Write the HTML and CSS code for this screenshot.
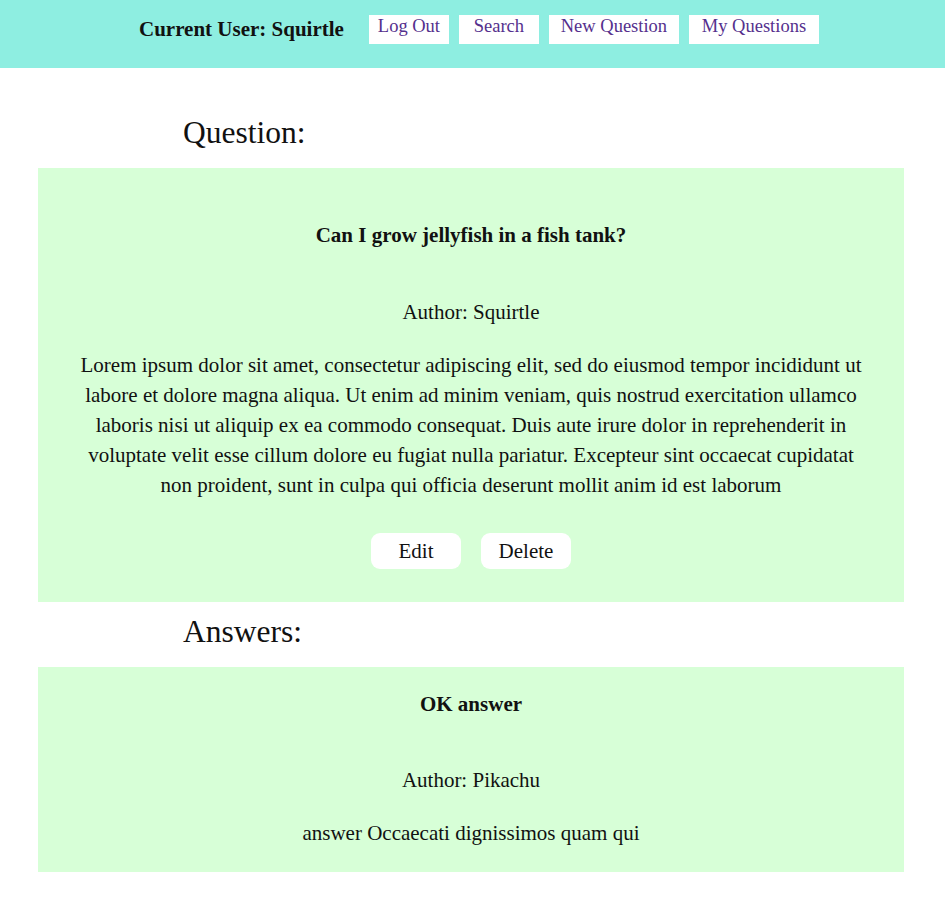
FILE: index.html
```html
<!DOCTYPE html>
<html lang="en">
<head>
<meta charset="utf-8">
<title>Question</title>
<link rel="stylesheet" href="styles.css">
</head>
<body>
<header class="topbar">
  <span class="current-user">Current User: Squirtle</span>
  <nav class="nav">
    <a class="nav-btn" href="#">Log Out</a>
    <a class="nav-btn" href="#">Search</a>
    <a class="nav-btn wide" href="#">New Question</a>
    <a class="nav-btn wide" href="#">My Questions</a>
  </nav>
</header>
<main class="page">
  <h2 class="section-title first">Question:</h2>
  <section class="card question">
    <h3 class="card-title">Can I grow jellyfish in a fish tank?</h3>
    <p class="author">Author: Squirtle</p>
    <p class="body-text">Lorem ipsum dolor sit amet, consectetur adipiscing elit, sed do eiusmod tempor incididunt ut labore et dolore magna aliqua. Ut enim ad minim veniam, quis nostrud exercitation ullamco laboris nisi ut aliquip ex ea commodo consequat. Duis aute irure dolor in reprehenderit in voluptate velit esse cillum dolore eu fugiat nulla pariatur. Excepteur sint occaecat cupidatat non proident, sunt in culpa qui officia deserunt mollit anim id est laborum</p>
    <div class="actions">
      <button class="action-btn">Edit</button>
      <button class="action-btn">Delete</button>
    </div>
  </section>
  <h2 class="section-title">Answers:</h2>
  <section class="card answer">
    <h3 class="card-title">OK answer</h3>
    <p class="author">Author: Pikachu</p>
    <p class="body-text">answer Occaecati dignissimos quam qui</p>
  </section>
</main>
</body>
</html>
```
FILE: styles.css
```css
html, body {
  margin: 0;
  padding: 0;
  background: #ffffff;
}
body {
  font-family: "Liberation Serif", "DejaVu Serif", serif;
  color: #111;
}
.topbar {
  height: 68px;
  box-sizing: border-box;
  background: #8eeee1;
  display: flex;
  align-items: flex-start;
  padding: 15px 0 0 139px;
}
.current-user {
  font-weight: bold;
  font-size: 21px;
  line-height: 28px;
  margin-right: 25px;
}
.nav {
  display: flex;
  gap: 10px;
}
.nav-btn {
  display: block;
  width: 80px;
  height: 29px;
  box-sizing: border-box;
  background: #ffffff;
  color: #55308d;
  text-decoration: none;
  text-align: center;
  font-size: 18.5px;
  line-height: 23px;
}
.nav-btn.wide {
  width: 130px;
}
.page {
  margin: 0 41px 0 38px;
}
.section-title {
  font-weight: normal;
  font-size: 31.5px;
  line-height: 36px;
  margin: 12px 0 17px 145px;
}
.section-title.first {
  margin-top: 47px;
}
.card {
  background: #d7ffd7;
  text-align: center;
  padding: 22px 40px 24px;
}
.card.question {
  padding-top: 52px;
  padding-bottom: 33px;
}
.card-title {
  font-size: 21px;
  line-height: 30px;
  font-weight: bold;
  margin: 0;
}
.author {
  font-size: 21px;
  line-height: 30px;
  margin: 46px 0 0;
}
.question .author {
  margin-top: 47px;
}
.body-text {
  font-size: 21px;
  line-height: 30px;
  margin: 23px 0 0;
}
.actions {
  display: flex;
  justify-content: center;
  gap: 20px;
  margin-top: 33px;
}
.action-btn {
  width: 90px;
  height: 36px;
  border: none;
  border-radius: 9px;
  background: #ffffff;
  font-family: inherit;
  font-size: 21px;
  color: #111;
  padding: 0;
}
```
